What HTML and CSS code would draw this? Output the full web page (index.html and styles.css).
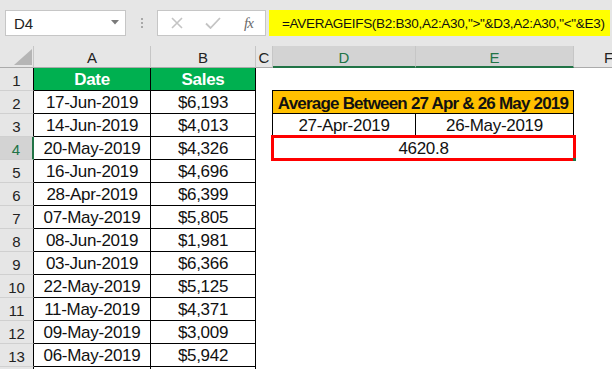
FILE: index.html
```html
<!DOCTYPE html>
<html>
<head>
<meta charset="utf-8">
<link rel="stylesheet" href="styles.css">
</head>
<body>
<div class="app">
  <div class="fbar">
    <div class="namebox">
      <span class="ref">D4</span>
      <svg class="caret" width="8" height="5" viewBox="0 0 8 5"><path d="M0 0H8L4 4.5Z" fill="#7a7a7a"/></svg>
    </div>
    <div class="grip"><i></i><i></i><i></i></div>
    <div class="fnbtns">
      <svg class="ico" width="12" height="12" viewBox="0 0 12 12"><path d="M1 1L11 11M11 1L1 11" stroke="#c4c4c4" stroke-width="1.6" fill="none"/></svg>
      <svg class="ico" width="16" height="12" viewBox="0 0 16 12"><path d="M1 6.5L5.5 11L15 1" stroke="#c4c4c4" stroke-width="1.8" fill="none"/></svg>
      <span class="fx">fx</span>
    </div>
    <div class="formula">=AVERAGEIFS(B2:B30,A2:A30,"&gt;"&amp;D3,A2:A30,"&lt;"&amp;E3)</div>
  </div>

  <div class="sheet">
    <div class="corner"><svg width="18" height="16" viewBox="0 0 18 16"><path d="M18 0V16H0Z" fill="#b5b5b5"/></svg></div>
    <div class="ch">A</div>
    <div class="ch">B</div>
    <div class="ch">C</div>
    <div class="ch sel">D</div>
    <div class="ch sel">E</div>
    <div class="ch last">F</div>

    <div class="rh">1</div>
    <div class="c t hd">Date</div>
    <div class="c t hd">Sales</div>
    <div class="c"></div>
    <div class="c"></div>
    <div class="c"></div>
    <div class="c"></div>

    <div class="rh">2</div>
    <div class="c t">17-Jun-2019</div>
    <div class="c t">$6,193</div>
    <div class="c"></div>
    <div class="c m title">Average Between 27 Apr &amp; 26 May 2019</div>
    <div class="c"></div>

    <div class="rh">3</div>
    <div class="c t">14-Jun-2019</div>
    <div class="c t">$4,013</div>
    <div class="c"></div>
    <div class="c t dd">27-Apr-2019</div>
    <div class="c t de">26-May-2019</div>
    <div class="c"></div>

    <div class="rh sel">4</div>
    <div class="c t">20-May-2019</div>
    <div class="c t">$4,326</div>
    <div class="c"></div>
    <div class="c m result">4620.8<span class="handle"></span></div>
    <div class="c"></div>

    <div class="rh">5</div>
    <div class="c t">16-Jun-2019</div>
    <div class="c t">$4,696</div>
    <div class="c"></div><div class="c"></div><div class="c"></div><div class="c"></div>

    <div class="rh">6</div>
    <div class="c t">28-Apr-2019</div>
    <div class="c t">$6,399</div>
    <div class="c"></div><div class="c"></div><div class="c"></div><div class="c"></div>

    <div class="rh">7</div>
    <div class="c t">07-May-2019</div>
    <div class="c t">$5,805</div>
    <div class="c"></div><div class="c"></div><div class="c"></div><div class="c"></div>

    <div class="rh">8</div>
    <div class="c t">08-Jun-2019</div>
    <div class="c t">$1,981</div>
    <div class="c"></div><div class="c"></div><div class="c"></div><div class="c"></div>

    <div class="rh">9</div>
    <div class="c t">03-Jun-2019</div>
    <div class="c t">$6,366</div>
    <div class="c"></div><div class="c"></div><div class="c"></div><div class="c"></div>

    <div class="rh">10</div>
    <div class="c t">22-May-2019</div>
    <div class="c t">$5,125</div>
    <div class="c"></div><div class="c"></div><div class="c"></div><div class="c"></div>

    <div class="rh">11</div>
    <div class="c t">11-May-2019</div>
    <div class="c t">$4,371</div>
    <div class="c"></div><div class="c"></div><div class="c"></div><div class="c"></div>

    <div class="rh">12</div>
    <div class="c t">09-May-2019</div>
    <div class="c t">$3,009</div>
    <div class="c"></div><div class="c"></div><div class="c"></div><div class="c"></div>

    <div class="rh">13</div>
    <div class="c t">06-May-2019</div>
    <div class="c t">$5,942</div>
    <div class="c"></div><div class="c"></div><div class="c"></div><div class="c"></div>

    <div class="rh"></div>
    <div class="c t"></div>
    <div class="c t"></div>
    <div class="c"></div><div class="c"></div><div class="c"></div><div class="c"></div>
  </div>
</div>
</body>
</html>
```

FILE: styles.css
```css
* { box-sizing: border-box; }
html, body { margin: 0; padding: 0; }
body {
  width: 612px;
  height: 369px;
  overflow: hidden;
  background: #fff;
  font-family: "Liberation Sans", Arial, sans-serif;
}
.app { width: 612px; height: 369px; overflow: hidden; }

.fbar {
  height: 46px;
  background: #e6e6e6;
  display: flex;
  align-items: flex-start;
  padding: 10px 0 0 5px;
}
.namebox {
  width: 121px;
  height: 26px;
  background: #fff;
  border: 1px solid #c6c6c6;
  display: flex;
  align-items: center;
  justify-content: space-between;
  padding: 0 6px 0 8px;
  font-size: 15px;
  color: #222;
}
.caret { margin-top: -1px; }
.grip {
  width: 31px;
  height: 26px;
  display: flex;
  flex-direction: column;
  align-items: center;
  justify-content: center;
  gap: 2px;
}
.grip i { display: block; width: 2px; height: 2px; background: #a8a8a8; }
.fnbtns {
  width: 109px;
  height: 26px;
  background: #fff;
  border: 1px solid #c6c6c6;
  display: flex;
  align-items: center;
  padding: 0 0 0 13px;
}
.fnbtns .ico:nth-child(1) { margin-right: 22px; }
.fnbtns .ico:nth-child(2) { margin-right: 23px; }
.fx {
  font-family: "Liberation Serif", serif;
  font-style: italic;
  font-size: 15px;
  color: #6a6a6a;
  letter-spacing: -1px;
}
.formula {
  margin-left: 3px;
  width: 341px;
  height: 26px;
  background: #ffff00;
  display: flex;
  align-items: center;
  padding-left: 13px;
  font-size: 13.5px;
  letter-spacing: -0.3px;
  color: #111;
  white-space: nowrap;
}

.sheet {
  display: grid;
  grid-template-columns: 34px 117px 105px 17px 143px 158px 38px;
  grid-template-rows: 22px repeat(14, 23px);
}
.corner {
  background: #e6e6e6;
  border-right: 1px solid #c6c6c6;
  border-bottom: 1px solid #ababab;
  display: flex;
  align-items: flex-end;
  justify-content: flex-end;
  padding: 0 1px 2px 0;
}
.ch {
  background: #e6e6e6;
  border-right: 1px solid #c6c6c6;
  border-bottom: 1px solid #ababab;
  display: flex;
  align-items: center;
  justify-content: center;
  font-size: 15px;
  color: #222;
  padding-top: 2px;
}
.ch.sel {
  background: #d3d3d3;
  color: #217346;
  border-bottom: 2px solid #217346;
}
.ch.last { justify-content: flex-start; padding-left: 30px; border-right: 0; }
.rh {
  background: #e6e6e6;
  border-right: 1px solid #000;
  border-bottom: 1px solid #d0d0d0;
  display: flex;
  align-items: center;
  justify-content: center;
  font-size: 15px;
  color: #222;
  padding-top: 2px;
}
.rh.sel {
  background: #d3d3d3;
  color: #217346;
  border-right: 2px solid #217346;
}
.c {
  background: #fff;
  display: flex;
  align-items: center;
  justify-content: center;
  font-size: 17px;
  letter-spacing: -0.3px;
  color: #111;
  padding-top: 2px;
  white-space: nowrap;
}
.c.t {
  border-right: 1px solid #000;
  border-bottom: 1px solid #000;
}
.c.hd {
  background: #00b050;
  color: #fff;
  font-weight: bold;
}
.c.m { grid-column: span 2; }
.c.title {
  margin: -1px 0 0 -1px;
  border: 1px solid #000;
  background: #ffc000;
  font-weight: bold;
  letter-spacing: -0.8px;
  padding-top: 3px;
}
.c.dd { margin-left: -1px; border-left: 1px solid #000; }
.c.result {
  position: relative;
  margin: -2px -2px 0 -2px;
  height: 26px;
  border: 3px solid #ff0000;
  padding-top: 1px;
}
.handle {
  position: absolute;
  right: -3px;
  bottom: -3px;
  width: 3px;
  height: 3px;
  background: #217346;
}
```
